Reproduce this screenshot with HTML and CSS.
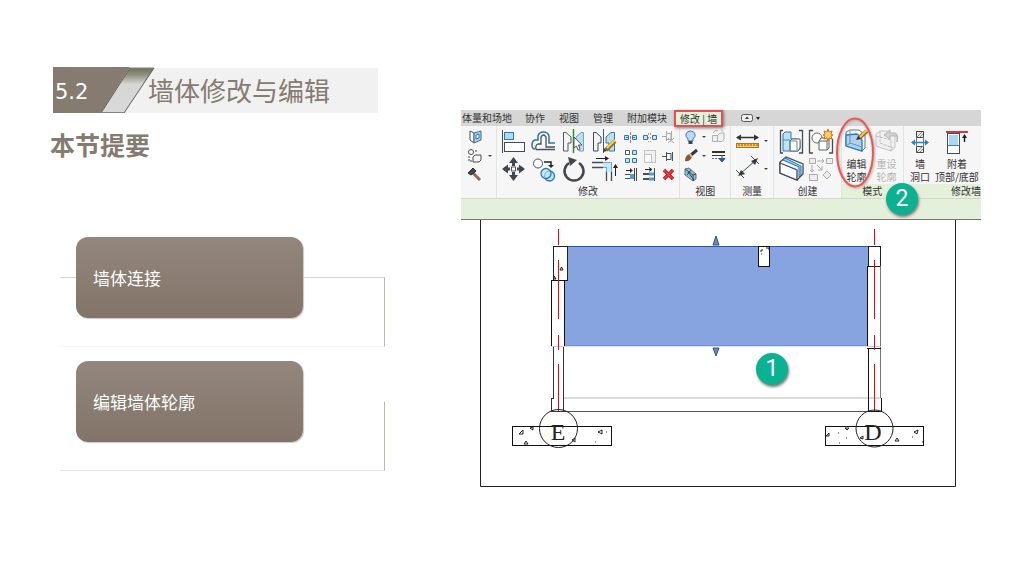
FILE: index.html
```html
<!DOCTYPE html>
<html lang="zh-CN">
<head>
<meta charset="utf-8">
<title>墙体修改与编辑</title>
<link rel="stylesheet" href="styles.css">
</head>
<body>
<main class="slide">
  <section class="outline">
    <header class="banner">
      <svg class="banner-art" viewBox="0 0 325 46" preserveAspectRatio="none" aria-hidden="true">
        <defs><linearGradient id="fold" x1="0" y1="0" x2="0" y2="1"><stop offset="0" stop-color="#6d6f58"/><stop offset=".15" stop-color="#8f9180"/><stop offset=".36" stop-color="#d6d6d5"/><stop offset="1" stop-color="#d9d9d9"/></linearGradient></defs>
        <path d="M71 1H325V46H71Z" fill="#f1f1f1"/>
        <path d="M0 0H77L48 46H0Z" fill="#857b70"/>
        <path d="M48 46L77 1H101L71 46Z" fill="url(#fold)"/>
        <path d="M48 46L77 1M71 46L101 1" stroke="#5d5e56" fill="none"/>
        <path d="M48 45.500H71M77 1H101" stroke="#858581" fill="none"/>
      </svg>
      <span class="banner-number">5.2</span>
      <h1 class="banner-title">墙体修改与编辑</h1>
    </header>
    <h2 class="subtitle">本节提要</h2>
    <ul class="topics">
      <li class="topic"><div class="topic-card">墙体连接</div></li>
      <li class="topic topic-last"><div class="topic-card">编辑墙体轮廓</div></li>
    </ul>
  </section>

  <section class="demo">
    <nav class="tabs">
      <button class="tab">体量和场地</button><button class="tab">协作</button><button class="tab">视图</button><button class="tab">管理</button><button class="tab">附加模块</button><button class="tab tab-active">修改 | 墙</button>
      <button class="tab-toggle" aria-label="显示选项"><svg width="20" height="10" viewBox="0 0 20 10"><rect x=".5" y="1.500" width="11" height="7" rx="2" fill="#eee" stroke="#555"/><path d="M4 6L6 3.500L8 6Z" fill="#333"/><path d="M15 4H19L17 7Z" fill="#222"/></svg></button>
    </nav>

    <div class="ribbon">
      <div class="panel panel-geometry">
        <div class="tools tools-small">
          <button class="tool" aria-label="面"><svg width="17" height="19" viewBox="0 0 17 19"><path d="M4 4L8 6V16L4 13Z" fill="#fff" stroke="#44515c"/><path d="M8 6L15 4V13L8 16Z" fill="#a9d4f0" stroke="#37709a"/><path d="M10 8L13 7V11L10 12Z" fill="#fff" stroke="#37709a"/></svg></button><span></span>
          <button class="tool" aria-label="剪切"><svg width="17" height="19" viewBox="0 0 17 19"><circle cx="5" cy="6" r="2.500" fill="#fff" stroke="#4c4c50"/><path d="M3 10V15H6M9 5H12" stroke="#444" fill="none" stroke-dasharray="2 1"/><path d="M9 9H15V14L13 16H7V11Z" fill="#f5f5f5" stroke="#4c4c50"/></svg></button><span class="arrow"></span>
          <button class="tool" aria-label="拆除"><svg width="17" height="19" viewBox="0 0 17 19"><path d="M7 8L14 15" stroke="#9b6655" stroke-width="3"/><path d="M2 8L7 3L10 6L5 10Z" fill="#434750" stroke="#272b32"/></svg></button>
        </div>
      </div>

      <div class="panel panel-modify">
        <div class="modify-body">
          <div class="tools tools-large">
            <button class="tool" aria-label="对齐"><svg width="30" height="28" viewBox="0 0 30 28"><path d="M3.500 3V26" stroke="#444b55"/><rect x="5.500" y="5.500" width="9" height="7" fill="#a9daf6" stroke="#3976a9"/><rect x="5.500" y="15.500" width="20" height="9" fill="#fff" stroke="#444b55"/></svg></button>
            <button class="tool" aria-label="偏移"><svg width="30" height="28" viewBox="0 0 30 28"><path d="M26 16H20V9Q19 5 14.500 5T9 9V13H6Q3 14 3 18T6 22" fill="none" stroke="#2878aa" stroke-width="1.500"/><path d="M7 22.500Q6 18 9 17H12V10Q14.500 6 17 10V20H26M7 22.500H26" fill="#fff" stroke="#48505a" stroke-width="1.300"/></svg></button>
            <button class="tool" aria-label="镜像"><svg width="30" height="28" viewBox="0 0 30 28"><path d="M4.500 5.500H7L12 10V16H9V24H4.500Z" fill="#f4f4f4" stroke="#525b65"/><path d="M24.500 5.500H22L17 10V16H20V24H24.500Z" fill="#b9dff4" stroke="#6da4c5"/><path d="M14.500 2V26" stroke="#239631" stroke-width="1.500"/><path d="M15 10V21L17.500 19L19 23L21 22L19.500 18H23Z" fill="#fff" stroke="#555"/></svg></button>
            <button class="tool" aria-label="绘制轴镜像"><svg width="30" height="28" viewBox="0 0 30 28"><path d="M4.500 5.500H7L12 10V16H9V24H4.500Z" fill="#f4f4f4" stroke="#424b55"/><path d="M25.500 5.500H22L17 10V16H20V24H25.500Z" fill="#b9dff4" stroke="#3976a2"/><path d="M14.500 2V26" stroke="#30608a"/><path d="M17 23L26 14" stroke="#946b2d" stroke-width="4"/><path d="M18 21L26 13" stroke="#ffd151" stroke-width="2"/><path d="M14 25L15 21L18 24Z" fill="#393939"/></svg></button>
            <button class="tool" aria-label="移动"><svg width="30" height="28" viewBox="0 0 30 28"><path d="M14.500 4V10M14.500 16V22M5 13H11M18 13H24" stroke="#404650" stroke-width="3"/><path d="M10 7L14.500 1L19 7ZM10 19L14.500 25L19 19ZM9 8.500L3 13L9 17.500ZM20 8.500L26 13L20 17.500Z" fill="#404650"/><rect x="12.500" y="11" width="4" height="4" fill="#fff" stroke="#555"/></svg></button>
            <button class="tool" aria-label="复制"><svg width="30" height="28" viewBox="0 0 30 28"><circle cx="9" cy="7.500" r="4.500" fill="#fff" stroke="#49505a"/><path d="M15 6H22V10" fill="none" stroke="#222" stroke-width="1.500"/><path d="M19 9H25L22 12Z" fill="#222"/><circle cx="20.500" cy="20" r="5" fill="#bce5fb" stroke="#2c7bae" stroke-width="1.300"/><circle cx="17" cy="17.500" r="5" fill="#bce5fb" fill-opacity=".7" stroke="#2c7bae" stroke-width="1.300"/></svg></button>
            <button class="tool" aria-label="旋转"><svg width="30" height="28" viewBox="0 0 30 28"><path d="M20 7A9.500 9.500 0 1 1 10 7" fill="none" stroke="#44484e" stroke-width="2.500"/><path d="M9 1L18 4L11 10Z" fill="#44484e"/></svg></button>
            <button class="tool" aria-label="修剪"><svg width="30" height="28" viewBox="0 0 30 28"><path d="M3 6.500H14M3 11.500H14M17.500 15V25M22.500 15V25" stroke="#454c55" stroke-width="1.300"/><path d="M14 9H20V16" fill="none" stroke="#6aaad3" stroke-width="6"/><path d="M14 9H20V16" fill="none" stroke="#c5e8fb" stroke-width="4"/><path d="M7 2.500H17M26.500 20V12" stroke="#222"/><path d="M16 0L20 2.500L16 5ZM24 12L26.500 8L29 12Z" fill="#222"/></svg></button>
          </div>
          <div class="tools tools-grid">
            <button class="tool" aria-label="拆分"><svg width="19" height="19" viewBox="0 0 19 19"><path d="M3.500 8.500H7.500V12.500H3.500ZM11.500 8.500H15.500V12.500H11.500Z" fill="#c6e7fb" stroke="#3976a2"/><path d="M9.500 5V16" stroke="#c56c6c" stroke-dasharray="3 1"/><path d="M5 10.500H8M11 10.500H14" stroke="#267dbb"/></svg></button>
            <button class="tool" aria-label="间隙拆分"><svg width="19" height="19" viewBox="0 0 19 19"><path d="M3.500 8.500H7.500V12.500H3.500ZM12.500 8.500H16.500V12.500H12.500Z" fill="#c6e7fb" stroke="#3976a2"/><path d="M8.500 6V15M10.500 6V15" stroke="#cf8e8e" stroke-dasharray="2 2"/></svg></button>
            <button class="tool" aria-label="解锁"><svg width="19" height="19" viewBox="0 0 19 19"><path d="M3 9.500H7M7.500 4V14M8 6.500H12V12.500H8M12.500 4V13M9 11L15 16M15 11L9 16" stroke="#aaa" fill="none"/></svg></button>
            <button class="tool" aria-label="阵列"><svg width="19" height="19" viewBox="0 0 19 19"><path d="M4.500 4.500H8.500V8.500H4.500Z" fill="#fff" stroke="#45566a"/><path d="M11.500 4.500H15.500V8.500H11.500ZM4.500 12.500H8.500V16.500H4.500ZM11.500 12.500H15.500V16.500H11.500Z" fill="#bfe4f8" stroke="#3976a2"/></svg></button>
            <button class="tool" aria-label="缩放"><svg width="19" height="19" viewBox="0 0 19 19"><rect x="4.500" y="4.500" width="11" height="12" fill="#f1f1f1" stroke="#c2c2c2"/><rect x="4.500" y="8.500" width="7" height="8" fill="#fafafa" stroke="#c2c2c2"/></svg></button>
            <button class="tool" aria-label="锁定"><svg width="19" height="19" viewBox="0 0 19 19"><path d="M3 10.500H7M7.500 6V15M8 7.500H12V13.500H8M13.500 6V15" stroke="#48505a" fill="none"/></svg></button>
            <button class="tool" aria-label="延伸单个"><svg width="19" height="19" viewBox="0 0 19 19"><path d="M4 9.500H10M4 13.500H10" stroke="#48505a"/><path d="M9 11.500H13" stroke="#4e9fd0" stroke-width="5"/><path d="M5 5.500H11" stroke="#222"/><path d="M9 3L12 5.500L9 8Z" fill="#333"/><path d="M13.500 3V16M15.500 3V16" stroke="#444"/></svg></button>
            <button class="tool" aria-label="延伸多个"><svg width="19" height="19" viewBox="0 0 19 19"><path d="M3 9H9M3 14H9" stroke="#48505a" stroke-width="2"/><path d="M14.500 3V16" stroke="#48505a"/><path d="M9 9H14M9 14H14" stroke="#4e9fd0" stroke-width="3"/><path d="M5 4.500H11M9 2.500L12 4.500L9 6.500" fill="none" stroke="#222"/></svg></button>
            <button class="tool" aria-label="删除"><svg width="19" height="19" viewBox="0 0 19 19"><path d="M5 5L14 14M14 5L5 14" stroke="#a51c22" stroke-width="3.500"/><path d="M5 5L14 14M14 5L5 14" stroke="#ef4044" stroke-width="1.500"/></svg></button>
          </div>
        </div>
        <div class="panel-label">修改</div>
      </div>

      <div class="panel panel-view">
        <div class="tools tools-view">
          <button class="tool" aria-label="显示"><svg width="17" height="19" viewBox="0 0 17 19"><path d="M6 12Q3 9 4 7Q5 4 8.500 4T13 7Q14 9 11 12V14H6Z" fill="#b5dbfb" stroke="#51789d"/><path d="M6.500 14H10.500V17H6.500Z" fill="#444"/></svg></button><span class="arrow"></span>
          <button class="tool" aria-label="显示隐藏"><svg width="17" height="19" viewBox="0 0 17 19"><path d="M3.500 8.500H8.500V14.500H3.500ZM8.500 8.500L11 6H15V12L13 14.500H8.500ZM4 6Q6 2 9 4M12 3L14 4" fill="#f0f0f0" stroke="#b0b0b0"/></svg></button>
          <button class="tool" aria-label="替换"><svg width="17" height="19" viewBox="0 0 17 19"><path d="M9 9L15 4" stroke="#343940" stroke-width="3"/><path d="M3 15Q3 9 8 8L10 11Q8 16 3 15Z" fill="#8c562f"/><path d="M8 8L10 11" stroke="#edbb77" stroke-width="2"/></svg></button><span class="arrow"></span>
          <button class="tool" aria-label="线处理"><svg width="17" height="19" viewBox="0 0 17 19"><path d="M3 6H16" stroke="#333" stroke-width="2"/><path d="M3 9.500H16" stroke="#333"/><path d="M3 12.500H10" stroke="#3976a2" stroke-dasharray="2 1"/><path d="M13 9V13M10 12.500L13 16L16 12.500Z" stroke="#2b5e90" fill="#2b5e90"/></svg></button>
          <button class="tool" aria-label="选择框"><svg width="17" height="19" viewBox="0 0 17 19"><path d="M3 4L7 3L14 9V14L11 16L3 10Z" fill="#96bed0" stroke="#5c7480"/><path d="M3 4L11 10L14 9M11 10V16M6 7L12 15M5 10L9 5" stroke="#29485c" fill="none"/></svg></button>
        </div>
        <div class="panel-label">视图</div>
      </div>

      <div class="panel panel-measure">
        <div class="tools tools-measure">
          <button class="tool" aria-label="测量"><svg width="28" height="28" viewBox="0 0 28 28"><path d="M3 10.500H24" stroke="#333" stroke-width="1.500"/><path d="M7 7.500L2 10.500L7 13.500ZM20 7.500L25 10.500L20 13.500Z" fill="#333"/><rect x="2.500" y="16.500" width="22" height="4" fill="#ffc650" stroke="#a6782c"/><path d="M5 17V19M8 17V19M11 17V19M14 17V19M17 17V19M20 17V19M23 17V19" stroke="#805d28"/></svg></button><span class="arrow"></span>
          <button class="tool" aria-label="尺寸标注"><svg width="28" height="28" viewBox="0 0 28 28"><path d="M6 19L22 5M2 15L10 23M17 1L25 9" fill="none" stroke="#4a4e53"/><path d="M4 21L7 15L11 19ZM24 3L17 6L21 10Z" fill="#343a42"/></svg></button><span class="arrow"></span>
        </div>
        <div class="panel-label">测量</div>
      </div>

      <div class="panel panel-create">
        <div class="tools tools-create">
          <button class="tool" aria-label="创建组"><svg width="30" height="28" viewBox="0 0 30 28"><path d="M6 3.500H3.500V26H6M22 3.500H25.500V26H22" fill="none" stroke="#454c55" stroke-width="1.300"/><path d="M6 7L8 5H14V12H21L23 14V22L21 24H6Z" fill="#b8e4fb" stroke="#3976a2"/><path d="M13 14L15 12H23V21L21 24H13Z" fill="#fff" stroke="#5c6269"/><path d="M6 13H13V24M13 14H20V23" fill="none" stroke="#5289af"/></svg></button>
          <button class="tool" aria-label="创建类似"><svg width="30" height="28" viewBox="0 0 30 28"><path d="M6 3.500H2.500V26H6M25.500 12V26H22" fill="none" stroke="#454c55" stroke-width="1.300"/><circle cx="10" cy="11" r="5" fill="#fff" stroke="#676a6d"/><path d="M12 14L14 11H22V21L20 23H12ZM12 14H20V23M20 14L22 11" fill="#fff" stroke="#5c6269"/><path d="M21 2L22 5L25 4L24 7L26 8L24 9L25 12L22 11L21 14L20 11L17 12L18 9L16 8L18 7L17 4L20 5Z" fill="#ffd35c" stroke="#d66e2c"/></svg></button>
          <button class="tool" aria-label="创建部件"><svg width="30" height="28" viewBox="0 0 30 28"><path d="M3 7L9 2L26 9V19L20 25L3 18Z" fill="#f4f4f4" stroke="#454c55" stroke-width="1.300"/><path d="M6 5L22 12V22L24 20V11L8 3Z" fill="#8fcdf5" stroke="#2279b6"/><path d="M3 8L20 15V25L3 18Z" fill="#fff" stroke="#454c55" stroke-width="1.300"/></svg></button>
          <button class="tool" aria-label="创建零件"><svg width="30" height="28" viewBox="0 0 30 28"><path d="M2.500 3.500H8.500V8.500H2.500ZM19.500 3.500H25.500V8.500H19.500ZM2.500 19.500H10.500V25.500H2.500ZM20 16L24 20L20 24L16 20Z" fill="#eee" stroke="#aaa"/><path d="M10 6H17M15 4L17 6L15 8M5 10V17M3 15L5 17L7 15M10 10L15 15M15 11V15H11" fill="none" stroke="#aaa"/></svg></button>
        </div>
        <div class="panel-label">创建</div>
      </div>

      <div class="panel panel-mode">
        <div class="commands">
          <button class="command"><svg width="28" height="31" viewBox="0 0 28 31"><path d="M3 6L7 4H16L22 9V22L19 25L3 20Z" fill="#f5f6f7" stroke="#6b7781"/><path d="M3 9L14 8Q19 11 19 15V25L3 20Z" fill="#acd2ef" stroke="#267abd" stroke-width="1.300"/><path d="M7 5V17L19 21M3 20L7 17" fill="none" stroke="#6694b5"/><path d="M16 12L24 5" stroke="#936827" stroke-width="4"/><path d="M17 11L24 4" stroke="#ffc745" stroke-width="2"/><path d="M13 14L15 10L18 13Z" fill="#333"/></svg><span>编辑<br>轮廓</span></button>
          <button class="command command-disabled" disabled><svg width="28" height="31" viewBox="0 0 28 31"><path d="M3 8L7 5H14L22 10V22L18 25L3 20Z" fill="#f0f0f0" stroke="#c4c4c4"/><path d="M3 10L18 14V25M7 5V17L20 22" fill="none" stroke="#bbb" stroke-dasharray="3 1"/><path d="M24 16V10H17V13L11 9L17 4V7H22Q26 8 24 16Z" fill="#d2d2d2" stroke="#b5b5b5"/></svg><span>重设<br>轮廓</span></button>
        </div>
        <div class="panel-label">模式</div>
      </div>

      <div class="panel panel-wall">
        <div class="commands commands-wall">
          <button class="command"><svg width="28" height="31" viewBox="0 0 28 31"><path d="M10.500 5.500H17.500V11.500H10.500ZM10.500 20.500H17.500V26.500H10.500Z" fill="#eee" stroke="#444"/><path d="M11 11L16 6M14 11L17 8M11 26L17 20M14 26L17 23" stroke="#888"/><path d="M10.500 11V21M17.500 11V21" stroke="#777"/><path d="M6 16.500H22" stroke="#2588c7" stroke-width="1.500"/><path d="M9 13.500L5 16.500L9 19.500ZM19 13.500L23 16.500L19 19.500Z" fill="#2588c7"/></svg><span>墙<br>洞口</span></button>
          <button class="command"><svg width="28" height="31" viewBox="0 0 28 31"><path d="M3 6H25" stroke="#c93f3f" stroke-width="2"/><rect x="4.500" y="7.500" width="12" height="20" fill="#fff" stroke="#444e58"/><rect x="6" y="9" width="9" height="10" fill="#a8d8f4"/><path d="M5 19.500H16" stroke="#3d82b0"/><path d="M21.500 10V16" stroke="#222" stroke-width="1.500"/><path d="M19 12L21.500 8L24 12Z" fill="#222"/></svg><span>附着<br>顶部/底部</span></button>
        </div>
        <div class="panel-label">修改墙</div>
      </div>
    </div>
    <div class="options-bar"></div>

    <svg class="drawing" viewBox="461 220 520 268" role="img" aria-label="墙体立面图">
      <path d="M480.500 220V486.500H955.500V220" fill="none" stroke="#222"/>
      <g shape-rendering="crispEdges">
        <path d="M564 398H881" stroke="#dcdcdc" stroke-width="2"/>
        <path d="M564 411.500H870" stroke="#555"/>
        <path d="M565 246H868V346H565Z" fill="#87a3e0"/>
        <path d="M565 246.500H868" stroke="#2455bb"/>
        <path d="M565 345.500H868" stroke="#7795d5"/>
        <path d="M565 346.500H868" stroke="#d6e2f1"/>
        <path d="M553.500 246.500H567.500V280.500H553.500Z" fill="#fff" stroke="#222"/>
        <path d="M551.500 346V280.500H564.500V346" fill="#fff" stroke="#111"/>
        <path d="M551 346.500H565" stroke="#ccc"/>
        <path d="M553.500 347V398M563.500 347V411M551.500 398V411M551 398.500H554M551 411.500H564" fill="none" stroke="#333"/>
        <path d="M868.500 246.500H880.500V266.500H868.500Z" fill="#fff" stroke="#222"/>
        <path d="M867.500 266V346M868.500 348V411H881M881.500 398V412" fill="none" stroke="#111"/>
        <path d="M880.500 266V398" stroke="#777"/>
        <path d="M867 346.500H881" stroke="#ccc"/><path d="M867 348.500H881" stroke="#111"/>
        <path d="M758.500 246.500H769.500V266.500H758.500Z" fill="#fff" stroke="#111"/>
        <path d="M558.500 229V245M558.500 260V319M558.500 335V350M558.500 364V411M874.500 229V245M874.500 260V319M874.500 335V350M874.500 364V411" stroke="#f00"/>
        <path d="M512.500 426.500H611.500V445.500H512.500ZM825.500 426.500H923.500V445.500H825.500Z" fill="none" stroke="#111"/>
      </g>
      <path d="M713 245L716 236L719 245ZM713 348H719L716 356Z" fill="#6888ce" stroke="#37547f"/>
      <path d="M554 276V279H556ZM560 270L561.500 267L563 270ZM760 251H762V249M766 248H769V250M519 434L523 430V434ZM530 428L533 427V430ZM524 444L526 441L528 444ZM598 432L602 430V434ZM572 440L575 438V442ZM826 436L829 433V436ZM845 428H849L847 430ZM860 438L863 436V439ZM895 441L897 438L899 441ZM914 432L918 430L917 434Z" fill="none" stroke="#222"/>
      <path d="M839 443H840M846 438H847M838 433H839M606 432H607M595 442H596M912 437H913M922 442H923M761 254H762" stroke="#333"/>
      <circle cx="558.500" cy="428.500" r="19" fill="none" stroke="#222"/><circle cx="874.500" cy="428.500" r="18.500" fill="none" stroke="#222"/>
      <text class="grid-name" x="558" y="440">E</text><text class="grid-name" x="873" y="440">D</text>
    </svg>
    <svg class="ring" width="42" height="74" viewBox="0 0 42 74" aria-hidden="true"><ellipse cx="21" cy="36.500" rx="18" ry="34" fill="none" stroke="#ee5557" stroke-width="2"/></svg>
    <span class="callout callout-wall">1</span>
    <span class="callout callout-profile">2</span>
  </section>
</main>
</body>
</html>
```
FILE: styles.css
```css
* { box-sizing: border-box; }

body {
  margin: 0;
  background: #fff;
  font-family: "DejaVu Sans", "Noto Sans CJK SC", sans-serif;
}

h1, h2, ul { margin: 0; padding: 0; }

button {
  margin: 0;
  padding: 0;
  border: 0;
  background: none;
  color: inherit;
  font: inherit;
}

svg { display: block; }

.slide {
  display: grid;
  grid-template-columns: minmax(0, 335fr) minmax(520px, 520fr);
  gap: 76px;
  padding: 67px 43px 40px 50px;
}

/* Section outline */
.banner {
  position: relative;
  display: flex;
  align-items: center;
  height: 46px;
  margin: 0 7px 0 3px;
  padding: 3px 0 0 2px;
}

.banner-art {
  position: absolute;
  inset: 0;
  width: 100%;
  height: 100%;
}

.banner-number {
  position: relative;
  width: 93px;
  color: #fff;
  font-size: 21px;
}

.banner-title {
  position: relative;
  color: #857b70;
  font-size: 26px;
  font-weight: 400;
  line-height: 46px;
  white-space: nowrap;
}

.subtitle {
  margin-top: 14px;
  color: #857b70;
  font-size: 25px;
  font-weight: 700;
  line-height: 40px;
}

.topics {
  display: grid;
  gap: 14px;
  margin: 70px 0 0 10px;
  list-style: none;
}

.topic {
  position: relative;
  padding: 0 82px 29px 16px;
}

.topic::before {
  content: "";
  position: absolute;
  inset: 40px 0 0;
  border: 1px solid;
  border-width: 1px 1px 1px 0;
  border-color: #d8d4d0 #c0b8b0 #f6f5f5;
}

.topic-last::before {
  border-top-color: transparent;
  border-bottom-color: #e6e4e2;
}

.topic-card {
  position: relative;
  padding: 30px 17px 26px;
  border-radius: 12px;
  background: linear-gradient(#93867d, #827468);
  box-shadow: 1px 1px 1px #cfc8c2;
  color: #fff;
  font-size: 17px;
  line-height: 25px;
}

/* Ribbon */
.demo {
  position: relative;
  margin-top: 43px;
  color: #333;
  font-family: "Noto Sans CJK SC", sans-serif;
  font-size: 10px;
}

.tabs {
  display: flex;
  height: 16px;
  background: #d6d6d6;
}

.tab {
  padding: 0 7px;
  line-height: 16px;
  white-space: nowrap;
}

.tab:first-child { padding: 0 6px 0 1px; }

.tab-active {
  position: relative;
  z-index: 1;
  height: 17px;
  padding: 0 4px;
  border: 2px solid #e84e50;
  background: #e5f0da;
  box-shadow: 1px 1px 3px #777;
  line-height: 13px;
}

.tab-toggle { margin-left: 18px; }

.ribbon {
  display: flex;
  height: 73px;
  background: #f6f6f6;
  border-bottom: 1px solid #d2d8cd;
}

.panel {
  display: flex;
  flex-direction: column;
  justify-content: space-between;
  border-right: 1px solid #e2e4df;
}

.panel-label {
  height: 14px;
  line-height: 14px;
  text-align: center;
}

.panel-geometry { flex: 35 0 0; }
.panel-modify { flex: 185 0 0; }
.panel-view { flex: 50 0 0; }
.panel-measure { flex: 43 0 0; }
.panel-create { flex: 67 0 0; }
.panel-mode { flex: 62 0 0; }
.panel-wall { flex: 78 0 0; border-right: 0; }

.modify-body { display: flex; gap: 2px; padding-left: 2px; }

.tools { display: grid; padding-top: 1px; align-items: center; }
.tools-small { grid-template-columns: 17px 9px; padding-left: 5px; }
.tools-large { grid-template-columns: repeat(4, 30px); }
.tools-grid { grid-template-columns: repeat(3, 19px); }
.tools-view { grid-template-columns: 17px 10px 17px; padding-left: 2px; }
.tools-measure { grid-template-columns: 28px 8px; padding-left: 3px; }
.tools-create { grid-template-columns: 30px 30px; padding-left: 3px; }

.arrow {
  justify-self: center;
  border: 2px solid transparent;
  border-top-color: #444;
  border-bottom: 0;
}

.tools-small .arrow { justify-self: end; }

.commands { display: grid; grid-template-columns: 30px 30px; }
.commands-wall { grid-template-columns: 32px 42px; }

.command {
  display: flex;
  flex-direction: column;
  align-items: center;
  line-height: 13px;
  white-space: nowrap;
}

.command-disabled { color: #b5b5b5; }

.panel-mode .panel-label,
.panel-wall .panel-label { background: #e5f0da; }

.panel-wall .panel-label { text-align: right; }

.options-bar {
  height: 21px;
  border-bottom: 1px solid #777;
  background: #e5f0da;
}

.drawing { width: 100%; }

.grid-name {
  fill: #222;
  font-family: "Liberation Serif", serif;
  font-size: 24px;
  text-anchor: middle;
}

/* Annotations */
.ring {
  position: absolute;
  top: 6px;
  left: 373px;
  filter: drop-shadow(1px 1px 1px #aaa);
}

.callout {
  position: absolute;
  width: 32px;
  height: 32px;
  border-radius: 50%;
  background: #0bb292;
  box-shadow: 1px 2px 3px #777;
  color: #fff;
  font-family: Roboto, sans-serif;
  font-size: 23px;
  line-height: 32px;
  text-align: center;
}

.callout-wall { top: 243px; left: 295px; }
.callout-profile { top: 73px; left: 425px; }
```
